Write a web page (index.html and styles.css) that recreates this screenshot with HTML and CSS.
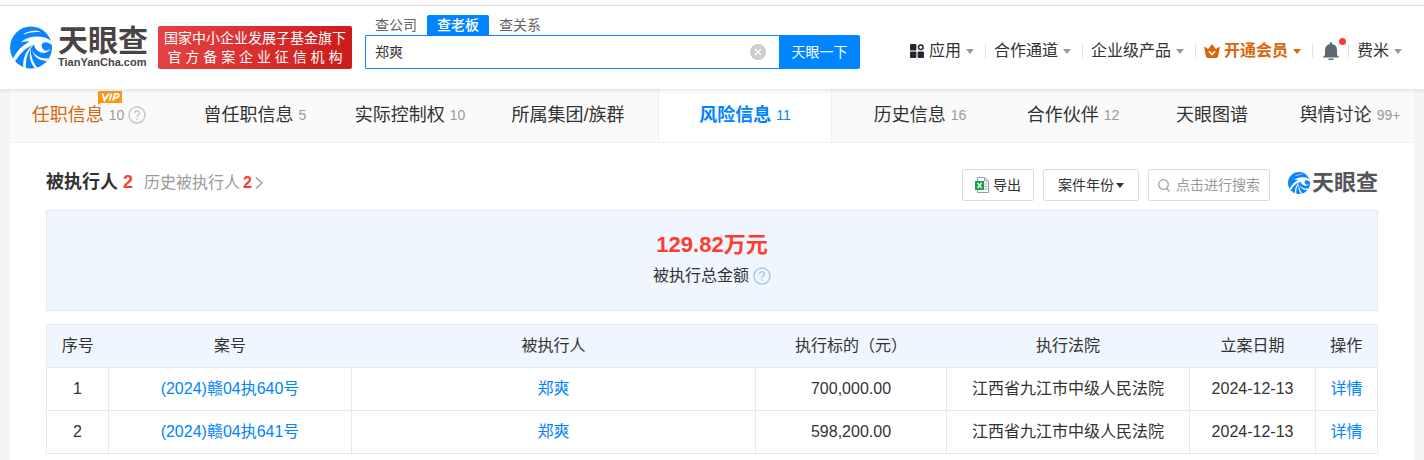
FILE: index.html
```html
<!DOCTYPE html>
<html lang="zh-CN">
<head>
<meta charset="utf-8">
<title>天眼查</title>
<link rel="stylesheet" href="styles.css">
</head>
<body>
<svg class="defs" aria-hidden="true">
  <symbol id="swirl" viewBox="0 0 126 126">
    <circle cx="63" cy="63" r="63" fill="#0a84ff"/>
    <path d="M40 23C54 13 76 9 94 17C76 15 58 18 44 23Z" fill="#fff"/>
    <path d="M32 47C54 29 80 27 102 32C112 34 120 40 128 48L123 54C114 47 106 45 99 49C92 55 94 66 104 72C110 74 116 71 121 67C117 76 108 80 98 79C84 77 74 67 72 55C50 62 32 78 17 103L9 97C20 74 36 58 58 46C50 44 40 45 32 47Z" fill="#fff"/>
    <path d="M74 52C54 70 46 98 48 126L40 124C37 98 48 68 74 52Z" fill="#fff"/>
    <path d="M62 66C62 88 68 106 82 124L75 126C60 108 56 86 62 66Z" fill="#fff"/>
    <path d="M66 70C74 88 92 98 117 96L112 103C90 105 71 92 66 70Z" fill="#fff"/>
  </symbol>
</svg>
<div class="topline"></div>
<header class="header">
  <a class="brand" href="#">
    <svg class="brand-mark"><use href="#swirl"/></svg>
    <span class="brand-text"><span class="brand-name">天眼查</span><span class="brand-domain">TianYanCha.com</span></span>
  </a>
  <div class="banner"><span>国家中小企业发展子基金旗下</span><span>官 方 备 案 企 业 征 信 机 构</span></div>
  <form class="search">
    <div class="search-tabs">
      <button type="button" class="search-tab">查公司</button>
      <button type="button" class="search-tab search-tab-on">查老板</button>
      <button type="button" class="search-tab">查关系</button>
    </div>
    <div class="search-row">
      <div class="search-box">
        <input class="search-input" type="text" value="郑爽" aria-label="查老板">
        <button type="button" class="search-clear" aria-label="清除"><svg viewBox="0 0 16 16"><circle cx="8" cy="8" r="8" fill="#ccc"/><path d="M5 5l6 6M11 5l-6 6" stroke="#fff" stroke-width="1.4"/></svg></button>
      </div>
      <button type="button" class="search-submit">天眼一下</button>
    </div>
  </form>
  <nav class="menu">
    <a class="menu-item" href="#"><svg class="icon-apps" viewBox="0 0 14 14"><g fill="#23272e"><rect width="6.4" height="6.4" rx="1"/><rect y="7.6" width="6.4" height="6.4" rx="1"/><rect x="7.6" y="7.6" width="6.4" height="6.4" rx="1"/></g><circle cx="10.8" cy="3.2" r="2.3" fill="none" stroke="#23272e" stroke-width="1.5"/></svg>应用<i class="caret"></i></a>
    <a class="menu-item" href="#">合作通道<i class="caret"></i></a>
    <a class="menu-item" href="#">企业级产品<i class="caret"></i></a>
    <a class="menu-item menu-vip" href="#"><svg class="icon-crown" viewBox="0 0 16 14"><path d="M0 2.4L4.2 5 8 0l3.8 5L16 2.4 14.2 12q-.3 2-2 2H3.800q-1.700 0-2-2Z" fill="#d9660a"/><path d="M5 7.200l3 3.300 3-3.300" fill="none" stroke="#fff" stroke-width="1.6"/></svg>开通会员<i class="caret"></i></a>
    <a class="menu-item menu-bell" href="#" aria-label="消息"><svg class="icon-bell" viewBox="0 0 16 18"><path d="M7 1a1 1 0 0 1 2 0v1c3.200.5 5 3 5 6v5l2 2v.5H0V15l2-2V8c0-3 1.800-5.500 5-6ZM5.500 16.500h5V18h-5Z" fill="#5f6772"/></svg><i class="dot"></i></a>
    <a class="menu-item" href="#">费米<i class="caret"></i></a>
  </nav>
</header>
<main class="page">
  <nav class="tabs">
    <a class="tab tab-vip" href="#"><span class="tab-label">任职信息<svg class="vip" viewBox="0 0 24 14"><path d="M1 0H24V12H3L0 14V1Z" fill="#fb9716"/><path d="M4.500 2.500l2 6.500 4.500-6.500M13.500 2.500L11.500 9.500M15 9.500L17 3h2.500q2 .3 1.300 2t-2.500 1.700h-2" fill="none" stroke="#fff" stroke-width="1.9"/></svg></span><span class="count">10</span><svg class="help" viewBox="0 0 18 18"><circle cx="9" cy="9" r="8"/><path d="M6.500 7.200q0-2.500 2.500-2.500t2.500 2.200q0 1.200-1.300 2T9 11M9 12.300v1.500"/></svg></a>
    <a class="tab" href="#">曾任职信息<span class="count">5</span></a>
    <a class="tab" href="#">实际控制权<span class="count">10</span></a>
    <a class="tab" href="#">所属集团/族群</a>
    <a class="tab tab-on" href="#">风险信息<span class="count">11</span></a>
    <a class="tab" href="#">历史信息<span class="count">16</span></a>
    <a class="tab" href="#">合作伙伴<span class="count">12</span></a>
    <a class="tab" href="#">天眼图谱</a>
    <a class="tab" href="#">舆情讨论<span class="count">99+</span></a>
  </nav>
  <section class="section">
    <div class="section-head">
      <h2 class="title">被执行人<span class="red">2</span></h2>
      <a class="history" href="#">历史被执行人<b class="red">2</b><svg class="chevron" viewBox="0 0 8 12"><path d="M1 .5l6 5.500-6 5.500" fill="none" stroke="#999" stroke-width="1.300"/></svg></a>
      <div class="tools">
        <button type="button" class="tool"><svg class="icon-excel" viewBox="0 0 14 16"><path d="M2.500 4V.5h7l4 3.500v11.500h-11V12M9.500.5V4h4" fill="none" stroke="#9aa0a6"/><path d="M9.500 7h3M9.500 9.500h3M9.500 12h3" stroke="#9aa0a6"/><rect y="4" width="9" height="9" fill="#14a34a"/><path d="M2.500 6l4 5M6.500 6l-4 5" stroke="#fff" stroke-width="1.300"/></svg>导出</button>
        <button type="button" class="tool tool-year">案件年份<i class="caret"></i></button>
        <label class="tool tool-search"><svg class="icon-lens" viewBox="0 0 12 13"><circle cx="5.500" cy="5.500" r="4.800" fill="none" stroke="#999" stroke-width="1.200"/><path d="M8.500 9.500l3 3" stroke="#999" stroke-width="1.200"/></svg><input class="tool-input" type="text" placeholder="点击进行搜索" aria-label="点击进行搜索"></label>
        <span class="mini"><svg class="mini-mark"><use href="#swirl"/></svg>天眼查</span>
      </div>
    </div>
    <div class="summary">
      <strong class="amount">129.82万元</strong>
      <span class="amount-label">被执行总金额<svg class="help help-blue" viewBox="0 0 18 18"><circle cx="9" cy="9" r="8"/><path d="M6.500 7.200q0-2.500 2.500-2.500t2.500 2.200q0 1.200-1.300 2T9 11M9 12.300v1.500"/></svg></span>
    </div>
    <table class="grid">
      <colgroup><col class="c-no"><col class="c-case"><col class="c-person"><col class="c-sum"><col class="c-case"><col class="c-date"><col class="c-no"></colgroup>
      <thead><tr><th>序号</th><th>案号</th><th>被执行人</th><th>执行标的（元）</th><th>执行法院</th><th>立案日期</th><th>操作</th></tr></thead>
      <tbody>
        <tr><td>1</td><td><a href="#">(2024)赣04执640号</a></td><td><a href="#">郑爽</a></td><td>700,000.00</td><td>江西省九江市中级人民法院</td><td>2024-12-13</td><td><a href="#">详情</a></td></tr>
        <tr><td>2</td><td><a href="#">(2024)赣04执641号</a></td><td><a href="#">郑爽</a></td><td>598,200.00</td><td>江西省九江市中级人民法院</td><td>2024-12-13</td><td><a href="#">详情</a></td></tr>
      </tbody>
    </table>
  </section>
</main>
</body>
</html>
```
FILE: styles.css
```css
* { box-sizing: border-box; }
body {
  margin: 0;
  min-height: 100vh;
  display: flex;
  flex-direction: column;
  background: #f5f5f5;
  color: #333;
  font: 16px/24px "Liberation Sans", "Noto Sans CJK SC", sans-serif;
}
a { color: inherit; text-decoration: none; }
button, input { font: inherit; color: inherit; margin: 0; padding: 0; border: 0; background: none; }
svg { flex: none; }
.defs { position: absolute; width: 0; height: 0; }
.topline { height: 6px; background: #fff; border-bottom: 1px solid #e2e2e2; }

.header {
  position: relative;
  z-index: 1;
  display: flex;
  align-items: flex-end;
  padding: 9px 22px 20px 10px;
  background: #fff;
  box-shadow: 0 1px 5px rgba(0, 0, 0, .12);
  white-space: nowrap;
}
.brand { display: flex; align-items: center; gap: 6px; }
.brand-mark { width: 42px; height: 43px; }
.brand-text { display: flex; flex-direction: column; color: #4a4344; font-weight: bold; }
.brand-name { font-size: 30px; line-height: 28px; }
.brand-domain { font-size: 11px; line-height: 14px; }
.banner {
  display: flex;
  flex-direction: column;
  justify-content: center;
  align-items: center;
  height: 43px;
  width: 194px;
  margin-left: 10px;
  border-radius: 2px;
  background: linear-gradient(100deg, #e54444, #cc1a1a);
  color: #fff;
  font-size: 14px;
  line-height: 19px;
}
.search { width: 495px; margin-left: 13px; }
.search-tabs { display: flex; }
.search-tab { height: 20px; padding: 0 10px; color: #666; font-size: 14px; line-height: 18px; }
.search-tab-on { border-radius: 2px 2px 0 0; background: #0084ff; color: #fff; font-weight: 500; }
.search-row { display: flex; height: 34px; }
.search-box {
  flex: 1;
  display: flex;
  align-items: center;
  padding: 0 13px 0 9px;
  border: 1px solid #0084ff;
  border-right: 0;
  border-radius: 2px 0 0 2px;
}
.search-input { flex: 1; min-width: 0; font-size: 14px; outline: 0; }
.search-clear, .search-clear svg { display: block; width: 16px; height: 16px; }
.search-submit { width: 81px; border-radius: 0 2px 2px 0; background: #0084ff; color: #fff; font-size: 14px; }

.menu { display: flex; align-items: center; height: 36px; margin-left: auto; color: #333; }
.menu-item { position: relative; display: flex; align-items: center; padding: 0 11px 0 8px; line-height: 16px; height: 14px; }
.menu-item + .menu-item { border-left: 1px solid #dfe4ea; }
.menu-item:last-child { padding-right: 0; }
.caret { margin-left: 5px; border: solid transparent; border-width: 5px 4px 0; border-top-color: #999; }
.icon-apps { width: 14px; height: 14px; margin-right: 5px; }
.icon-crown { width: 16px; height: 14px; margin-right: 4px; }
.icon-bell { width: 16px; height: 18px; }
.menu-vip { color: #d9660a; font-weight: bold; }
.menu-vip .caret { border-top-color: #d9660a; }
.menu-bell { padding: 0 9px 0 10px; }
.dot { position: absolute; top: -6px; right: 2px; width: 7px; height: 7px; border-radius: 50%; background: #ff3b30; }

.page { flex: 1; margin: 0 10px; background: #fff; }
.tabs {
  display: grid;
  grid-template-columns: 158fr 174fr 136fr 180fr 174fr 176fr 130fr 148fr 128fr;
  height: 54px;
  border-bottom: 1px solid #f0f0f0;
  background: #fafafa;
  font-size: 18px;
  white-space: nowrap;
}
.tab { display: flex; align-items: center; justify-content: center; padding-bottom: 1px; }
.tab-label { position: relative; }
.count { margin-left: 5px; color: #999; font-size: 14px; }
.tab-vip { color: #d9660a; }
.vip { position: absolute; right: -18px; top: -12px; width: 24px; height: 14px; }
.help { width: 18px; height: 18px; margin-left: 4px; fill: none; stroke: #c3c8cf; stroke-width: 1.5; }
.help-blue { stroke: #a9cbe8; }
.tab-on { border: solid #f0f0f0; border-width: 0 1px; background: #fff; color: #0084ff; font-weight: bold; }
.tab-on .count { color: #0084ff; font-weight: normal; }

.section { padding: 26px 36px 8px; }
.section-head { display: flex; align-items: flex-start; height: 41px; white-space: nowrap; }
.title { margin: 0; font-size: 18px; line-height: 27px; }
.red { margin-left: 5px; color: #ff3b30; }
.history { display: flex; align-items: center; margin-left: 11px; color: #999; line-height: 27px; }
.history .red { margin-left: 3px; }
.chevron { width: 8px; height: 12px; margin-left: 3px; }
.tools { display: flex; gap: 9px; margin-left: auto; font-size: 14px; }
.tool { display: flex; align-items: center; justify-content: center; height: 32px; padding: 0 12px; border: 1px solid #ddd; border-radius: 2px; }
.tool:first-child { width: 72px; }
.icon-excel { width: 14px; height: 16px; margin-right: 4px; }
.tool-year { width: 96px; }
.tool-year .caret { margin-left: 2px; border-top-color: #333; }
.tool-search { width: 122px; padding: 0 9px; }
.icon-lens { width: 12px; height: 13px; margin-right: 6px; }
.tool-input { flex: 1; min-width: 0; outline: 0; }
.tool-input::placeholder { color: #999; opacity: 1; }
.mini { display: flex; align-items: center; gap: 2px; height: 28px; margin-left: 9px; color: #55565a; font-size: 22px; font-weight: bold; }
.mini-mark { width: 22px; height: 22px; }

.summary {
  display: flex;
  flex-direction: column;
  align-items: center;
  padding: 18px 0 20px;
  border: 1px solid #deebf6;
  background: #eff6fd;
}
.amount { color: #ff3b30; font-size: 22px; line-height: 32px; }
.amount-label { display: flex; align-items: center; line-height: 29px; }

.grid { width: 100%; margin-top: 13px; border-collapse: collapse; table-layout: fixed; text-align: center; }
.grid th, .grid td { height: 43px; padding: 0; border: 1px solid #deebf6; }
.grid th { border-width: 1px 0; background: #eff6fd; font-weight: normal; }
.grid th:first-child { border-left-width: 1px; }
.grid th:last-child { border-right-width: 1px; }
.grid a { color: #0084ff; }
.c-no { width: 62px; }
.c-case { width: 243px; }
.c-sum { width: 191px; }
.c-date { width: 126px; }
```
